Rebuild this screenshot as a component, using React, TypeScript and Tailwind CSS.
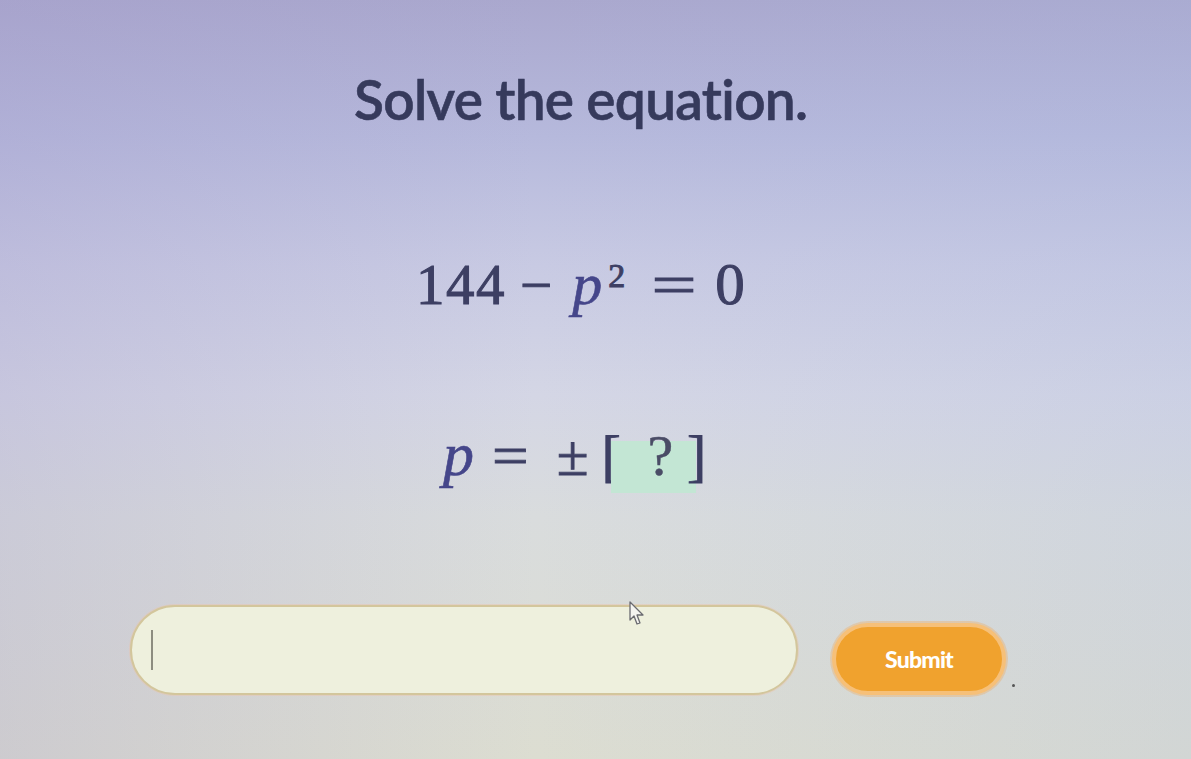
import React from "react";

export default function App() {
  return (
    <div className="relative w-[1191px] h-[759px] overflow-hidden bg-[linear-gradient(180deg,#aaa8ce_0%,#b6b9dc_18%,#c8cae3_35%,#d4d6e5_52%,#d9dcdd_68%,#dcddd1_100%)]">
      <div className="absolute inset-0 bg-[linear-gradient(90deg,rgba(160,150,200,0.25)_0%,rgba(255,255,255,0)_45%,rgba(170,185,225,0.2)_100%)]" />
      <div className="relative flex flex-col">
        <div className="pl-[354px] pt-[59px]">
          <h1 className="font-['Lato',sans-serif] font-semibold text-[55px] leading-[80px] text-[#363a5c] tracking-[-0.7px] [-webkit-text-stroke:0.6px_#363a5c]">
            Solve the equation.
          </h1>
        </div>

        <div className="pl-[416px] mt-[109px] flex items-baseline font-['Liberation_Serif',serif] text-[57px] leading-[72px] text-[#3d3f63] [-webkit-text-stroke:1px_#3d3f63]">
          <span className="tracking-[1.5px]">144</span>
          <span className="ml-[14px]">−</span>
          <span className="ml-[20px] italic text-[#45468a] [-webkit-text-stroke:0.6px_#45468a] text-[60px]">p</span>
          <span className="ml-[6px] text-[34px] relative top-[-17px]">2</span>
          <span className="ml-[33px] inline-block scale-x-[1.4]">=</span>
          <span className="ml-[25px] text-[59px]">0</span>
        </div>

        <div className="pl-[443px] mt-[89px] flex items-baseline font-['Liberation_Serif',serif] text-[58px] leading-[72px] text-[#3d3f63] [-webkit-text-stroke:0.8px_#3d3f63]">
          <span className="italic text-[#45468a] [-webkit-text-stroke:0.6px_#45468a] text-[62px]">p</span>
          <span className="ml-[20px] inline-block scale-x-[1.12]">=</span>
          <span className="ml-[30px]">±</span>
          <span className="ml-[13px]">[</span>
          <span className="-ml-[10px] inline-block w-[85px] h-[52px] leading-[29px] bg-[#c3e6d4] text-center pl-[14px] text-[#4a4c66] [-webkit-text-stroke:0.5px_#4a4c66]">
            ?
          </span>
          <span className="-ml-[9px]">]</span>
        </div>

        <div className="pl-[130px] mt-[112px] flex items-start gap-[34px]">
          <div className="w-[668px] h-[90px] rounded-full border-[2px] border-[#d3c69c] bg-[#eef0dd] flex items-center pl-[19px] shadow-[0_0_0_1px_rgba(235,195,170,0.45)]">
            <div className="w-[2px] h-[40px] bg-[#8d8d80]" />
          </div>
          <button className="mt-[18px] w-[174px] h-[72px] rounded-full bg-[#f0a22e] border-[4px] border-[#f6c079] shadow-[0_0_0_2px_rgba(240,170,90,0.35)] text-white font-['Lato',sans-serif] font-black text-[23px] tracking-[-0.8px]">
            Submit
          </button>
        </div>
      </div>
      <svg className="absolute left-[628px] top-[600px]" width="18" height="28" viewBox="0 0 18 28">
        <path d="M2 2 L2 20 L6 16 L9 24 L12 23 L9 15 L15 15 Z" fill="#f4f4f0" stroke="#6a6a70" strokeWidth="1.3" strokeLinejoin="round" />
      </svg>
      <div className="absolute left-[1012px] top-[684px] w-[3px] h-[3px] rounded-full bg-[#555]" />
    </div>
  );
}
